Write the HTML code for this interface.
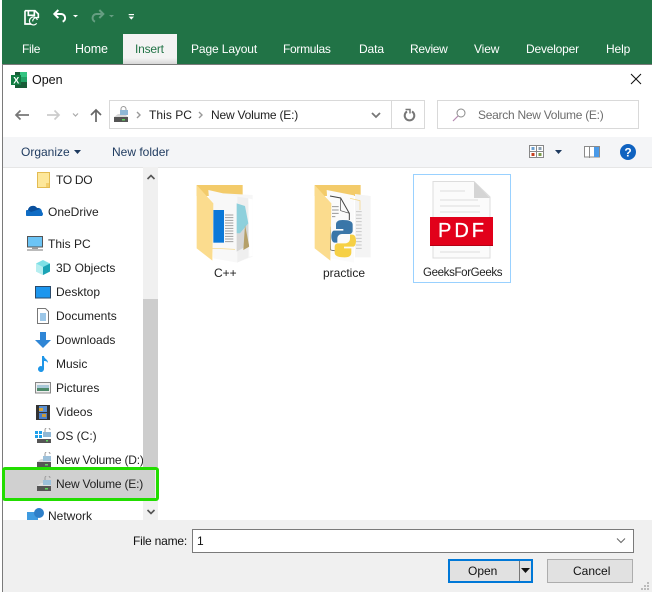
<!DOCTYPE html>
<html><head><meta charset="utf-8"><style>
html,body{margin:0;padding:0;background:#fff}
#p{position:relative;width:652px;height:592px;overflow:hidden;background:#fff;font:12px "Liberation Sans",sans-serif;color:#222}
#p div,#p svg{position:absolute}
.t{white-space:nowrap;line-height:16px;height:16px}
.r{color:#fff;top:41px;font-size:12px;letter-spacing:-.12px}
.n{left:56px}
</style></head><body><div id="p">
<div style="left:2px;top:0;width:650px;height:65px;background:#217346"></div>
<div style="left:123px;top:34px;width:54px;height:30px;background:linear-gradient(#f3f3f3 80%,#d8d8d8)"></div>
<svg style="left:0;top:0" width="140" height="30" viewBox="0 0 420 90" fill="none">
<path d="M75 32h30l10 10v12M75 32v40h18M85 32v14h18V32" stroke="#fff" stroke-width="5"/>
<path d="M112 60a12 12 0 1 0-2 10M98 64a12 12 0 0 1 18-10" stroke="#fff" stroke-width="3.500"/>
<path d="M168 42h16a12 12 0 0 1 4 23" stroke="#fff" stroke-width="6"/><path d="M175 30l-12 12 12 12" stroke="#fff" stroke-width="6"/>
<path d="M219 45h15l-7.500 7z" fill="#fff"/>
<path d="M305 42h-16a12 12 0 0 0-4 23" stroke="#669e82" stroke-width="6"/><path d="M298 30l12 12-12 12" stroke="#669e82" stroke-width="6"/>
<path d="M327 45h15l-7.500 7z" fill="#669e82"/>
<rect x="386" y="42" width="16" height="3.500" fill="#fff"/><path d="M386 50h16l-8 9z" fill="#fff"/></svg>
<div class="t r" style="left:22px;letter-spacing:-.3px">File</div>
<div class="t r" style="left:75px;font-size:12.500px">Home</div>
<div class="t r" style="left:135px;color:#217346;letter-spacing:-.2px">Insert</div>
<div class="t r" style="left:191px">Page Layout</div>
<div class="t r" style="left:283px;letter-spacing:-.3px">Formulas</div>
<div class="t r" style="left:359px">Data</div>
<div class="t r" style="left:410px;letter-spacing:-.3px">Review</div>
<div class="t r" style="left:474px">View</div>
<div class="t r" style="left:526px;letter-spacing:-.2px">Developer</div>
<div class="t r" style="left:606px">Help</div>

<div style="left:2px;top:64px;width:650px;height:1px;background:#7a7a7a"></div>
<div style="left:2px;top:64px;width:1px;height:528px;background:#7a7a7a"></div>

<svg style="left:11px;top:72px" width="16" height="16" viewBox="0 0 16 16"><rect x="4" y="0" width="12" height="16" fill="#185c37"/><rect x="9" y="0" width="7" height="5" fill="#33c481"/><rect x="9" y="5" width="7" height="5" fill="#21a366"/><rect x="0" y="3" width="10" height="10" fill="#107c41"/><text x="2.200" y="11.500" font-size="9" font-weight="700" fill="#fff" font-family="Liberation Sans">X</text></svg>
<div class="t" style="left:32px;top:72px;font-size:12.500px;color:#111">Open</div>
<svg style="left:630px;top:73px" width="12" height="12" viewBox="0 0 12 12" stroke="#111" fill="none"><path d="M1 1l10 10M11 1L1 11"/></svg>

<svg style="left:14px;top:106px" width="92" height="18" viewBox="0 0 92 18" fill="none" stroke-width="1.700">
<path d="M15 9H2M6.500 4.500L2 9l4.500 4.500" stroke="#777"/><path d="M45 9H33M40.500 4.500L45 9l-4.500 4.500" stroke="#ccc"/>
<path d="M59 7.500l2.500 2.500 2.500-2.500" stroke="#aaa" stroke-width="1.200"/><path d="M82 16V4M77 9l5-5 5 5" stroke="#666"/></svg>

<div style="left:109px;top:100px;width:281px;height:27px;border:1px solid #d9d9d9"></div>
<div style="left:391px;top:100px;width:32px;height:27px;border:1px solid #d9d9d9"></div>
<svg style="left:113px;top:106px" width="16" height="16" viewBox="0 0 16 16"><path d="M1 11l4-3h7l3 3z" fill="#d8d8d8"/><rect x="1" y="11" width="14" height="5" fill="#555"/><rect x="9" y="13" width="3" height="1.500" fill="#5fd35f"/><path d="M8 4V3a2.500 2.500 0 0 1 5 0v1" stroke="#999" fill="none"/><rect x="7" y="4" width="8" height="5" fill="#8fb8d6"/></svg>
<svg style="left:134px;top:110px" width="10" height="10" stroke="#999" fill="none" stroke-width="1.400"><path d="M3 2l3 3-3 3"/></svg>
<div class="t" style="left:149px;top:107px;letter-spacing:.05px">This PC</div>
<svg style="left:196px;top:110px" width="10" height="10" stroke="#999" fill="none" stroke-width="1.400"><path d="M3 2l3 3-3 3"/></svg>
<div class="t" style="left:211px;top:107px;letter-spacing:-.2px">New Volume (E:)</div>
<svg style="left:370px;top:110px" width="12" height="10" stroke="#777" fill="none" stroke-width="1.800"><path d="M2 3l4 4 4-4"/></svg>
<svg style="left:402px;top:107px" width="14" height="15" viewBox="0 0 14 15" stroke="#777" fill="none" stroke-width="2"><path d="M5 4.500A4.800 4.800 0 1 0 10 4.500"/><path d="M3.500 2.500H8v4" stroke-width="1.500"/></svg>

<div style="left:437px;top:100px;width:200px;height:27px;border:1px solid #d9d9d9"></div>
<svg style="left:451px;top:107px" width="16" height="16" viewBox="0 0 16 16" fill="none"><circle cx="10" cy="6" r="4" stroke="#8a8a8a"/><path d="M7 9l-5 5" stroke="#b58ab0" stroke-width="1.200"/></svg>
<div class="t" style="left:478px;top:107px;color:#6d6d6d;letter-spacing:-.27px">Search New Volume (E:)</div>

<div style="left:3px;top:137px;width:649px;height:30px;background:#f4f5f7;border-bottom:1px solid #e6e6e6"></div>
<div class="t" style="left:21px;top:144px;color:#1e3a5f">Organize</div>
<svg style="left:73px;top:149px" width="9" height="6"><path d="M1 1h7L4.500 5z" fill="#1e3a5f"/></svg>
<div class="t" style="left:112px;top:144px;color:#1e3a5f">New folder</div>
<svg style="left:529px;top:145px" width="16" height="14" viewBox="0 0 16 14"><rect x=".5" y=".5" width="14" height="12" fill="#fff" stroke="#888"/><path d="M7.500 0v13M0 6.500h15" stroke="#888"/><rect x="2.500" y="2" width="3" height="3" fill="#6a9fd0"/><rect x="9.500" y="2" width="3" height="3" fill="#8a9fb0"/><rect x="2.500" y="8" width="3" height="3" fill="#c8401f"/><rect x="9.500" y="8" width="3" height="3" fill="#7a9a4a"/></svg>
<svg style="left:554px;top:149px" width="9" height="6"><path d="M1 1h7L4.500 5z" fill="#1e3a5f"/></svg>
<svg style="left:584px;top:146px" width="16" height="12" viewBox="0 0 16 12"><rect x=".5" y=".5" width="15" height="10.500" fill="#fff" stroke="#8a8a8a"/><rect x="10" y="1" width="5" height="10" fill="#4a9ae8"/><path d="M5.500 0v12" stroke="#8a8a8a"/></svg>
<svg style="left:620px;top:144px" width="16" height="16" viewBox="0 0 16 16"><circle cx="8" cy="8" r="8" fill="#0f62c0"/><text x="8" y="12.500" font-size="12" font-weight="700" text-anchor="middle" fill="#fff" font-family="Liberation Sans">?</text></svg>

<!-- nav -->
<div style="left:143px;top:167px;width:15px;height:353px;background:#f0f0f0"></div>
<div style="left:143px;top:299px;width:15px;height:168px;background:#cdcdcd"></div>
<svg style="left:146px;top:173px" width="10" height="8" stroke="#555" fill="none" stroke-width="1.600"><path d="M1.500 6L5 2.500 8.500 6"/></svg>
<svg style="left:146px;top:508px" width="10" height="8" stroke="#555" fill="none" stroke-width="1.600"><path d="M1.500 2L5 5.500 8.500 2"/></svg>

<div style="left:4px;top:469px;width:151px;height:29px;background:#d0d0d0"></div>

<svg style="left:37px;top:172px" width="13" height="16"><rect x=".5" y=".5" width="12" height="15" fill="#fde79a" stroke="#e3bb52"/><rect x="9" y="11" width="3" height="4" fill="#f3cf6c"/></svg>
<div class="t n" style="top:172px;letter-spacing:-.3px">TO DO</div>
<svg style="left:26px;top:205px" width="18" height="12" viewBox="0 0 18 12"><path d="M1 11a3 3 0 0 1 1-6 5 5 0 0 1 9-2 4 4 0 0 1 5 4 2.500 2.500 0 0 1 0 4z" fill="#0f6cc4"/><path d="M2 5a5 5 0 0 1 9-2 4 4 0 0 1 3 1L5 7z" fill="#0a4f9c"/></svg>
<div class="t" style="left:48px;top:204px">OneDrive</div>
<svg style="left:27px;top:236px" width="17" height="16" viewBox="0 0 17 16"><rect x=".5" y=".5" width="15" height="10.500" fill="#6cc4f5" stroke="#555"/><rect x="5" y="11" width="6" height="2" fill="#999"/><rect y="13" width="16" height="2" fill="#bbb"/></svg>
<div class="t" style="left:48px;top:236px">This PC</div>
<svg style="left:35px;top:259px" width="16" height="17" viewBox="0 0 16 17"><path d="M8 1l7 3.500v8L8 16l-7-3.500v-8z" fill="#7ee0e6"/><path d="M8 8l7-3.500v8L8 16z" fill="#1aa3b5"/><path d="M1 4.500L8 8v8l-7-3.500z" fill="#b6eef0"/></svg>
<div class="t n" style="top:260px">3D Objects</div>
<svg style="left:35px;top:286px" width="16" height="13"><rect x=".5" y=".5" width="15" height="11.500" fill="#1c96ee" stroke="#2a4a6a"/></svg>
<div class="t n" style="top:284px">Desktop</div>
<svg style="left:37px;top:308px" width="12" height="16" viewBox="0 0 12 16" fill="#fff" stroke="#777"><path d="M.5.500h8l3 3v12H.5z"/><path d="M3 6h6M3 8h6M3 10h6M3 12h6" stroke="#3a8fd0"/></svg>
<div class="t n" style="top:308px">Documents</div>
<svg style="left:35px;top:332px" width="16" height="16" viewBox="0 0 16 16"><path d="M5 0h6v8h5l-8 8-8-8h5z" fill="#2f86d6"/></svg>
<div class="t n" style="top:332px">Downloads</div>
<svg style="left:37px;top:356px" width="12" height="16" viewBox="0 0 12 16"><path d="M5 0h2c0 3 4 3 4 7-1-2-3-2-4-2v8a3 3 0 1 1-2-2.800z" fill="#1e96e8"/></svg>
<div class="t n" style="top:356px">Music</div>
<svg style="left:35px;top:382px" width="16" height="12"><rect x=".5" y=".5" width="15" height="10.500" fill="#eee" stroke="#888"/><rect x="2" y="3" width="12" height="3" fill="#a9c8d8"/><rect x="2" y="6" width="12" height="3" fill="#4d8a6a"/></svg>
<div class="t n" style="top:380px">Pictures</div>
<svg style="left:36px;top:405px" width="14" height="15"><rect width="14" height="15" fill="#333"/><rect x="3" y="1" width="8" height="6" fill="#5a8fd0"/><rect x="3" y="3" width="4" height="3" fill="#d8a63a"/><rect x="3" y="8" width="8" height="6" fill="#4a7fc8"/><rect x="6" y="9" width="4" height="3" fill="#c89a3a"/></svg>
<div class="t n" style="top:404px">Videos</div>
<svg style="left:35px;top:428px" width="17" height="15" viewBox="0 0 17 15"><rect x="0" y="3" width="3" height="3" fill="#1ea0ea"/><rect x="4" y="3" width="3" height="3" fill="#1ea0ea"/><rect x="0" y="7" width="3" height="3" fill="#1ea0ea"/><rect x="4" y="7" width="3" height="3" fill="#1ea0ea"/><rect x="2" y="11" width="14" height="4" fill="#555"/><rect x="11" y="12" width="2" height="1.500" fill="#5fd35f"/><rect x="8" y="4" width="8" height="5" fill="#8fb8d6"/><path d="M10 4V2a2.500 2.500 0 0 1 5 0" stroke="#999" fill="none"/></svg>
<div class="t n" style="top:428px">OS (C:)</div>
<svg style="left:36px;top:452px" width="16" height="15" viewBox="0 0 16 15"><path d="M1 10l4-3h7l3 3z" fill="#d8d8d8"/><rect x="1" y="10" width="14" height="5" fill="#555"/><rect x="9" y="12" width="3" height="1.500" fill="#5fd35f"/><rect x="7" y="4" width="8" height="5" fill="#9cc0da"/><path d="M9 4V2a2.500 2.500 0 0 1 5 0" stroke="#999" fill="none"/></svg>
<div class="t n" style="top:452px;width:87px;overflow:hidden;letter-spacing:-.2px">New Volume (D:)</div>
<svg style="left:36px;top:476px" width="16" height="15" viewBox="0 0 16 15"><path d="M1 10l4-3h7l3 3z" fill="#e0e0e0"/><rect x="1" y="10" width="14" height="5" fill="#555"/><rect x="9" y="12" width="3" height="1.500" fill="#5fd35f"/><rect x="7" y="4" width="8" height="5" fill="#9cc0da"/><path d="M9 4V2a2.500 2.500 0 0 1 5 0" stroke="#999" fill="none"/></svg>
<div class="t n" style="top:476px;letter-spacing:-.2px">New Volume (E:)</div>
<div style="left:2px;top:467px;width:151px;height:28px;border:3px solid #22dd00;border-radius:3px"></div>
<svg style="left:27px;top:508px" width="18" height="12" viewBox="0 0 18 12"><rect x="0" y="4" width="11" height="8" fill="#3f9be0"/><circle cx="12" cy="5" r="5" fill="#2f7fc8"/></svg>
<div class="t" style="left:48px;top:508px">Network</div>

<!-- files -->
<svg style="left:180px;top:170px" width="340" height="120" viewBox="0 0 1020 360">
<!-- C++ folder -->
<path d="M50 45H188V78H50z" fill="#f3cb6a"/>
<path d="M130 70L218 75V260L170 278z" fill="#f6f6f6"/>
<path d="M85 60L172 80V278L100 265z" fill="#f8f8f8"/>
<path d="M172 80L205 85V262L172 278z" fill="#efefef"/>
<rect x="100" y="120" width="32" height="98" fill="#0a78d8"/>
<path d="M135 135h25M135 143h25M135 151h25M135 159h25M135 167h25M135 175h25M135 183h25M135 191h25M135 199h25M135 207h25M135 215h25" stroke="#a0a0a0" stroke-width="3"/>
<path d="M97 235L165 238" stroke="#f3d27a" stroke-width="2"/>
<path d="M170 100L195 108 205 160 180 190 170 190z" fill="#8ed0dc"/>
<path d="M170 190L180 190 205 160 205 225 170 245z" fill="#d6d6d6"/>
<path d="M195 165L208 230 190 240z" fill="#b5a068"/>
<path d="M205 85L218 88V258L208 260z" fill="#fff"/>
<path d="M50 45L100 100 97 272 50 235z" fill="#fbdc8e"/>
<!-- practice folder -->
<path d="M404 45H542V78H404z" fill="#f3cb6a"/>
<path d="M525 72L572 78V262L525 262z" fill="#f4f4f4"/>
<path d="M528 125h17M528 135h17M528 145h17M528 155h17M528 165h17M528 175h17M528 185h17M528 195h17M528 205h17M528 215h17M528 225h17M528 235h17" stroke="#c8c8c8" stroke-width="3"/>
<path d="M440 60L522 76V278L452 265z" fill="#fbfbfb"/>
<path d="M510 85L540 92V120" stroke="#f3d27a" stroke-width="2" fill="none"/>
<path d="M450 78L482 84 508 130V150" stroke="#444" stroke-width="3" fill="none"/>
<path d="M482 84V122L508 130" stroke="#444" stroke-width="2" fill="none"/>
<path d="M456 110h20M456 120h20M456 130h20M456 140h10" stroke="#999" stroke-width="3"/>
<path d="M452 170V240L510 252" stroke="#444" stroke-width="2" fill="none"/>
<path id="a" d="M488 150c-14 0-20 5-20 14v13h22v5h-28c-6 0-8 10-8 18 0 10 4 18 10 18h8v-12c0-8 6-14 14-14h22c6 0 10-4 10-10v-18c0-9-9-14-30-14z" fill="#3a76a8"/>
<path d="M488 150c-14 0-20 5-20 14v13h22v5h-28c-6 0-8 10-8 18 0 10 4 18 10 18h8v-12c0-8 6-14 14-14h22c6 0 10-4 10-10v-18c0-9-9-14-30-14z" transform="rotate(180 491 206)" fill="#f6d045"/>
<path d="M404 45L454 100 451 272 404 235z" fill="#fbdc8e"/>
</svg>
<div class="t" style="left:214px;top:265px">C++</div>
<div class="t" style="left:323px;top:265px">practice</div>

<div style="left:413px;top:174px;width:96px;height:107px;border:1px solid #99d1ff"></div>
<svg style="left:430px;top:181px" width="64" height="79" viewBox="0 0 64 79"><path d="M3 .5h41L60 16v61H3z" fill="#fbfbfb" stroke="#ddd"/><path d="M44 .5V17h16z" fill="#d5d5d5"/><path d="M10 10h25M10 19h38M10 25h40M10 31h40M10 71h40" stroke="#ddd"/></svg>
<div style="left:430px;top:217px;width:63px;height:29px;background:#e2001a;color:#fff;font-size:20px;text-align:center;line-height:29px;letter-spacing:3px;text-indent:2px;box-shadow:inset 0 -1px #b30014;-webkit-text-stroke:.3px #fff">PDF</div>
<div class="t" style="left:423px;top:265px;font-size:11.500px;letter-spacing:-.35px">GeeksForGeeks</div>

<!-- bottom -->
<div style="left:3px;top:520px;width:649px;height:72px;background:#f0f0f0"></div>
<div class="t" style="left:133px;top:533px;color:#111;letter-spacing:-.2px">File name:</div>
<div style="left:192px;top:529px;width:440px;height:22px;background:#fff;border:1px solid #7a7a7a"></div>
<div class="t" style="left:197px;top:533px;color:#111">1</div>
<svg style="left:615px;top:537px" width="12" height="8" stroke="#666" fill="none"><path d="M2 1.500l4 4 4-4"/></svg>
<div style="left:448px;top:559px;width:81px;height:20px;background:#e1e1e1;border:2px solid #0078d7"></div>
<div class="t" style="left:468px;top:563px;color:#111">Open</div>
<div style="left:519px;top:561px;width:1px;height:20px;background:#777"></div>
<svg style="left:521px;top:568px" width="9" height="6"><path d="M0 0h9L4.500 5z" fill="#111"/></svg>
<div style="left:547px;top:559px;width:84px;height:22px;background:#e1e1e1;border:1px solid #adadad"></div>
<div class="t" style="left:573px;top:563px;color:#111">Cancel</div>
<svg style="left:640px;top:582px" width="10" height="8" fill="#bbb"><rect x="7" y="0" width="2" height="2"/><rect x="4" y="3" width="2" height="2"/><rect x="7" y="3" width="2" height="2"/><rect x="1" y="6" width="2" height="2"/><rect x="4" y="6" width="2" height="2"/><rect x="7" y="6" width="2" height="2"/></svg>
</div></body></html>
